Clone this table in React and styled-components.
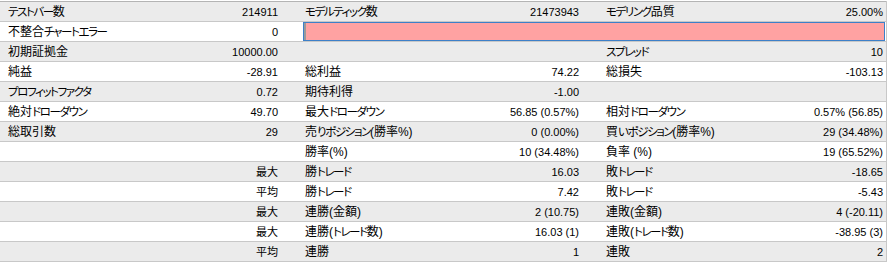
import React from 'react';
import styled, { createGlobalStyle } from 'styled-components';

const Global = createGlobalStyle`
  html, body { margin: 0; padding: 0; background: #ffffff; }
  body { padding-top: 1px; }
`;

const Table = styled.div`
  width: 887px;
  box-sizing: border-box;
  border-right: 1px solid #c8c8c8;
  border-bottom: 1px solid #c8c8c8;
  font-family: "Liberation Sans", "Noto Sans CJK JP", sans-serif;
  color: #000;
`;

const Row = styled.div`
  display: grid;
  grid-template-columns: 150px 133px 167px 134px 166px 136px;
  height: 20px;
  box-sizing: border-box;
  border-top: 1px solid ${p => (p.$first ? '#b4b4b4' : '#c8c8c8')};
  background: ${p => (p.$alt ? '#ebebeb' : '#ffffff')};
`;

const Label = styled.div`
  padding-left: ${p => p.$pad}px;
  padding-top: 1px;
  font-size: 12px;
  line-height: 19px;
  height: 19px;
  box-sizing: border-box;
  white-space: nowrap;
  font-feature-settings: "palt";
`;

const Kana = styled.span`
  font-size: 11.5px;
  letter-spacing: -1.4px;
`;

const Value = styled.div`
  text-align: right;
  padding-right: ${p => p.$pad}px;
  padding-top: 1px;
  font-size: 11px;
  line-height: 19px;
  height: 19px;
  box-sizing: border-box;
  white-space: nowrap;
`;

const Bar = styled.div`
  grid-column: 3 / 7;
  margin-left: 20px;
  margin-right: 1px;
  height: 19px;
  box-sizing: border-box;
  border: 1px solid #3d80c8;
  background: #ffa2a2;
  display: flex;
`;

const BarFill = styled.div`
  width: 2px;
  background: #9a9a9a;
`;

const BAR = 'BAR';

function Jp({ text }) {
  const parts = text.split(/([\u30A0-\u30FF\u3040-\u309F]+)/).filter(Boolean);
  return parts.map((p, i) =>
    /[\u30A0-\u30FF\u3040-\u309F]/.test(p) ? <Kana key={i}>{p}</Kana> : <React.Fragment key={i}>{p}</React.Fragment>
  );
}

const rows = [
  ['テストバー数', '214911', 'モデルティック数', '21473943', 'モデリング品質', '25.00%'],
  ['不整合チャートエラー', '0', BAR],
  ['初期証拠金', '10000.00', '', '', 'スプレッド', '10'],
  ['純益', '-28.91', '総利益', '74.22', '総損失', '-103.13'],
  ['プロフィットファクタ', '0.72', '期待利得', '-1.00', '', ''],
  ['絶対ドローダウン', '49.70', '最大ドローダウン', '56.85 (0.57%)', '相対ドローダウン', '0.57% (56.85)'],
  ['総取引数', '29', '売りポジション(勝率%)', '0 (0.00%)', '買いポジション(勝率%)', '29 (34.48%)'],
  ['', '', '勝率(%)', '10 (34.48%)', '負率 (%)', '19 (65.52%)'],
  ['', '最大', '勝トレード', '16.03', '敗トレード', '-18.65'],
  ['', '平均', '勝トレード', '7.42', '敗トレード', '-5.43'],
  ['', '最大', '連勝(金額)', '2 (10.75)', '連敗(金額)', '4 (-20.11)'],
  ['', '最大', '連勝(トレード数)', '16.03 (1)', '連敗(トレード数)', '-38.95 (3)'],
  ['', '平均', '連勝', '1', '連敗', '2'],
];

export default function App() {
  return (
    <>
      <Global />
      <Table>
        {rows.map((r, i) => (
          <Row key={i} $alt={i % 2 === 0} $first={i === 0}>
            <Label $pad={8}><Jp text={r[0]} /></Label>
            <Value $pad={5}>{r[1]}</Value>
            {r[2] === BAR ? (
              <Bar><BarFill /></Bar>
            ) : (
              <>
                <Label $pad={22}><Jp text={r[2]} /></Label>
                <Value $pad={5}>{r[3]}</Value>
                <Label $pad={22}><Jp text={r[4]} /></Label>
                <Value $pad={3}>{r[5]}</Value>
              </>
            )}
          </Row>
        ))}
      </Table>
    </>
  );
}
